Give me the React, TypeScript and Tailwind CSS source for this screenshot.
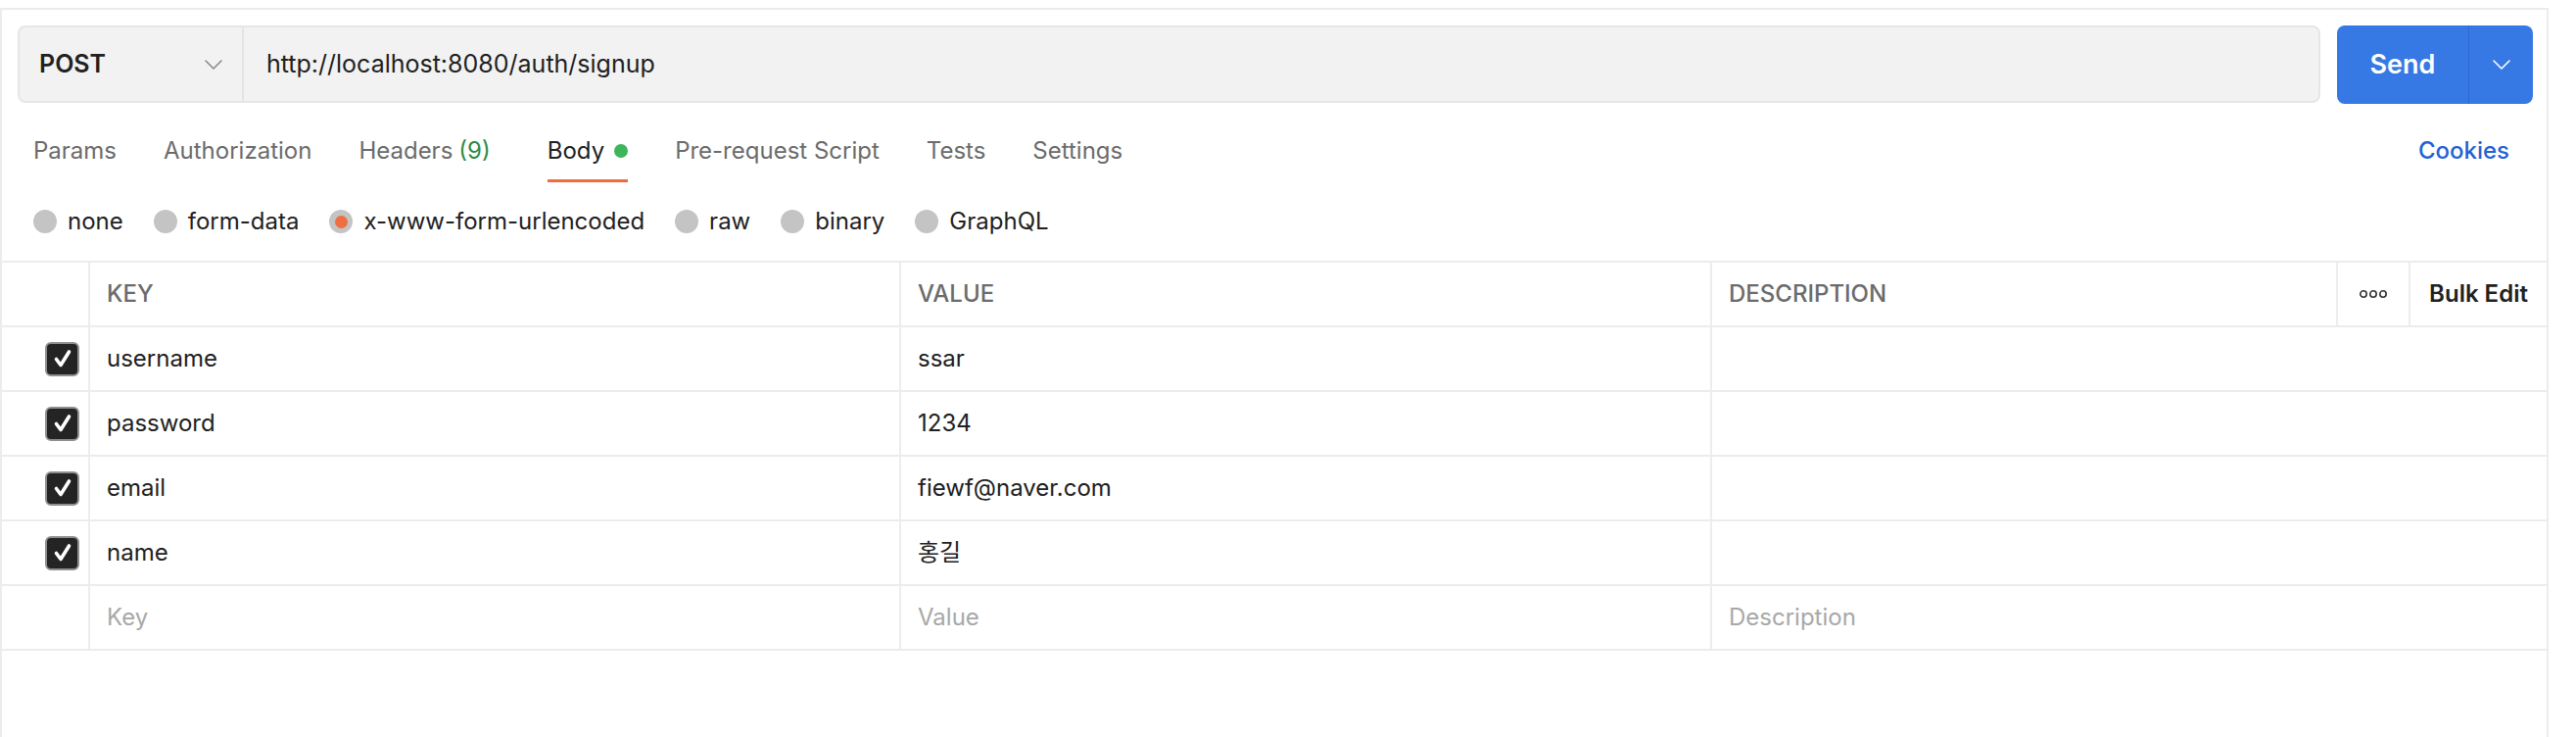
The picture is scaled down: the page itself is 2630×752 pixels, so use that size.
import React from "react";

const font = "font-['Inter','Noto_Sans_CJK_KR',sans-serif]";

const tabs = ["Params", "Authorization", "Headers", "Body", "Pre-request Script", "Tests", "Settings"];
const bodyTypes = ["none", "form-data", "x-www-form-urlencoded", "raw", "binary", "GraphQL"];

const rows = [
  ["username", "ssar"],
  ["password", "1234"],
  ["email", "fiewf@naver.com"],
  ["name", "홍길"]
];

function Chevron({ className }: { className?: string }) {
  return (
    <svg className={className} width="18" height="10" viewBox="0 0 18 10" fill="none">
      <polyline points="1,1 9,9 17,1" stroke="currentColor" strokeWidth="1.6" strokeLinecap="round" strokeLinejoin="round" />
    </svg>
  );
}

function Checkbox() {
  return (
    <div className="flex h-[35px] w-[35px] items-center justify-center rounded-[6px] border-2 border-[#8f8f8f] bg-[#242424]">
      <svg width="20" height="20" viewBox="0 0 20 20" fill="none">
        <polyline points="3.5,10.5 8,16.5 16.5,3" stroke="white" strokeWidth="3.6" strokeLinecap="round" strokeLinejoin="round" />
      </svg>
    </div>
  );
}

function Radio({ selected }: { selected?: boolean }) {
  return (
    <span className="flex h-[24px] w-[24px] shrink-0 items-center justify-center rounded-full bg-[#c4c4c4]">
      {selected ? <span className="h-[13px] w-[13px] rounded-full bg-[#ef6f42]" /> : null}
    </span>
  );
}

export default function App() {
  return (
    <div className={`h-[752px] w-[2630px] bg-white pt-[8px] ${font}`}>
      <div className="h-[744px] w-[2602px] border-x-2 border-t-2 border-[#ececec]">
        {/* url bar */}
        <div className="flex pl-[16px] pr-[14px] pt-[16px]">
          <div className="flex h-[79px] flex-1 rounded-[8px] border-2 border-[#e6e6e6] bg-[#f2f2f2]">
            <div className="flex w-[229px] items-center justify-between border-r-2 border-[#e4e4e4] pl-[20px] pr-[20px]">
              <span className="text-[25px] font-semibold text-[#212121]">POST</span>
              <Chevron className="text-[#8a8a8a]" />
            </div>
            <div className="flex items-center pl-[23px] text-[25px] text-[#212121]">http://localhost:8080/auth/signup</div>
          </div>
          <div className="ml-[17px] flex h-[80px] w-[200px] rounded-[8px] bg-[#3779e4] text-white">
            <div className="flex w-[135px] items-center justify-center border-r border-[#2f69cc] text-[27px] font-semibold">Send</div>
            <div className="flex flex-1 items-center justify-center">
              <Chevron />
            </div>
          </div>
        </div>

        {/* tabs */}
        <div className="mt-[12px] flex h-[68px] items-stretch gap-[48px] pl-[32px] pr-[38px] pt-[7px] text-[24px]">
          {tabs.map((tab) => (
            <div
              key={tab}
              className={
                tab === "Body"
                  ? "ml-[10px] flex items-center gap-[10px] border-b-[3px] border-[#ef6c3e] text-[#212121]"
                  : "flex items-center border-b-[3px] border-transparent text-[#6b6b6b]"
              }
            >
              {tab}
              {tab === "Headers" ? <span className="ml-[6px] text-[#2f8a43]">(9)</span> : null}
              {tab === "Body" ? <span className="h-[14px] w-[14px] rounded-full bg-[#3cb55b]" /> : null}
            </div>
          ))}
          <div className="ml-auto flex items-center border-b-[3px] border-transparent font-medium text-[#1f63d6]">Cookies</div>
        </div>

        {/* body type */}
        <div className="flex h-[80px] items-center gap-[31px] pl-[32px] text-[24px] text-[#212121]">
          {bodyTypes.map((type) => (
            <div key={type} className="flex items-center gap-[11px]">
              <Radio selected={type === "x-www-form-urlencoded"} />
              {type}
            </div>
          ))}
        </div>

        {/* table */}
        <div className="border-t-2 border-[#ececec] text-[24px]">
          <div className="flex h-[66px] border-b-2 border-[#ececec] font-medium text-[#6b6b6b]">
            <div className="w-[90px] border-r-2 border-[#ededed]" />
            <div className="flex w-[828px] items-center border-r-2 border-[#ededed] pl-[17px]">KEY</div>
            <div className="flex w-[828px] items-center border-r-2 border-[#ededed] pl-[17px]">VALUE</div>
            <div className="flex w-[639px] items-center border-r-2 border-[#ededed] pl-[17px]">DESCRIPTION</div>
            <div className="flex w-[74px] items-center justify-center border-r-2 border-[#ededed]">
              <svg width="30" height="10" viewBox="0 0 30 10" fill="none">
                <circle cx="5" cy="5" r="3.2" stroke="#333" strokeWidth="1.6" />
                <circle cx="15" cy="5" r="3.2" stroke="#333" strokeWidth="1.6" />
                <circle cx="25" cy="5" r="3.2" stroke="#333" strokeWidth="1.6" />
              </svg>
            </div>
            <div className="flex flex-1 items-center justify-center font-semibold text-[#212121]">Bulk Edit</div>
          </div>
          {rows.map(([key, value]) => (
            <div key={key} className="flex h-[66px] border-b-2 border-[#ececec] text-[#212121]">
              <div className="flex w-[90px] items-center justify-end border-r-2 border-[#ededed] pr-[9px]">
                <Checkbox />
              </div>
              <div className="flex w-[828px] items-center border-r-2 border-[#ededed] pl-[17px]">{key}</div>
              <div className="flex w-[828px] items-center border-r-2 border-[#ededed] pl-[17px]">{value}</div>
              <div className="flex-1" />
            </div>
          ))}
          <div className="flex h-[66px] border-b-2 border-[#ececec] text-[#a8a8a8]">
            <div className="w-[90px] border-r-2 border-[#ededed]" />
            <div className="flex w-[828px] items-center border-r-2 border-[#ededed] pl-[17px]">Key</div>
            <div className="flex w-[828px] items-center border-r-2 border-[#ededed] pl-[17px]">Value</div>
            <div className="flex flex-1 items-center pl-[17px]">Description</div>
          </div>
        </div>
      </div>
    </div>
  );
}
